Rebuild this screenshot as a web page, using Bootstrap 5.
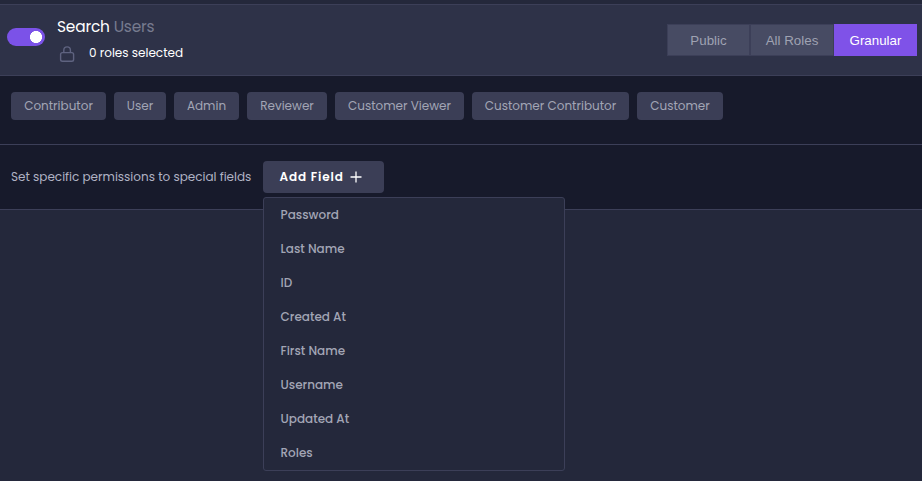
<!DOCTYPE html>
<html lang="en">
<head>
<meta charset="utf-8">
<meta name="viewport" content="width=device-width, initial-scale=1">
<title>Search Users permissions</title>
<link href="https://cdn.jsdelivr.net/npm/bootstrap@5.3.0/dist/css/bootstrap.min.css" rel="stylesheet">
<style>
:root{--line:#3c3f58;--panel:#24283b;--deep:#171a2b;--muted:#a2a5b5}
body{background:var(--panel);font-family:Poppins,Inter,sans-serif;font-size:12px;line-height:20px;color:#fff;height:481px;overflow:hidden}
.perm-head{height:72px;margin-top:4px;background:#2e3248;border-top:1px solid var(--line);border-bottom:1px solid var(--line);padding:0 5px 0 7px}
.switch-lg.form-switch{padding:0;min-height:0;margin:-6px 12px 0 0;line-height:0}
.switch-lg .form-check-input{width:38px;height:18px;margin:0;float:none;background-color:#7b52e8;border:0;background-size:auto;background-image:radial-gradient(circle at 29px 9px,#fff 5.7px,transparent 6.3px)!important;background-position:0 0}
.perm-text{margin-top:-3px}
.perm-title{font-size:15.4px;line-height:24px;letter-spacing:-.2px;margin-bottom:1px}
.perm-title span{color:#777b8f}
.perm-lock{margin-top:2px}
.seg .btn{font:13.333px/20px "Liberation Sans",Arial,sans-serif;width:83px;height:32px;padding:6px 0 4px;border-radius:0;border:1px solid var(--line);background:#474b63;color:#9fa2b2}
.seg .btn.mid{width:84px}
.seg .btn.active{background:#7f52e8;border-color:#7f52e8;color:#fff}
.band{background:var(--deep);border-bottom:1px solid var(--line)}
.roles{height:69px;padding:16px 11px;gap:8px}
.role{height:28px;border-radius:4px;background:#3b3e56;color:var(--muted);line-height:28px;text-align:center;white-space:nowrap}
.w1{width:95px}.w2{width:52px}.w3{width:65px}.w4{width:80px}.w5{width:129px}.w6{width:157px}.w7{width:86px}
.fields{height:65px;padding:16px 11px}
.fields-label{width:252px;color:#b0b2c4;white-space:nowrap}
.add{width:121px;height:32px;padding:0 0 0 16.5px;border:0;border-radius:4px;background:#3b3e56!important;color:#fff!important;font-size:12px;font-weight:600;letter-spacing:.9px;text-align:left}
.add svg{margin-left:6.4px}
.field-menu.dropdown-menu{top:36px;left:0;width:302px;height:274px;padding:0;background:var(--panel);border:1px solid var(--line);border-radius:3px}
.field-menu .dropdown-item{height:34px;padding:7px 16.5px;font-size:12px;line-height:20px;font-weight:500;color:var(--muted)}
</style>
</head>
<body>
<header class="perm-head d-flex align-items-center">
  <div class="form-check form-switch switch-lg"><input class="form-check-input" type="checkbox" role="switch" checked aria-label="Enable search"></div>
  <div class="perm-text me-auto">
    <div class="perm-title">Search <span>Users</span></div>
    <div class="d-flex align-items-center mt-1">
      <svg width="20" height="16" viewBox="0 0 20 16" fill="none" stroke="#5f6380" stroke-width="1.4" class="perm-lock me-2 flex-shrink-0"><rect x="3.6" y="6.6" width="13" height="8.6" rx="1.8"/><path d="M6.8 6.4V4.2a3.3 3.3 0 0 1 6.6 0v2.2"/></svg>
      <div class="ms-1">0 roles selected</div>
    </div>
  </div>
  <div class="seg d-flex">
    <button class="btn" type="button">Public</button><button class="btn mid" type="button">All Roles</button><button class="btn active" type="button">Granular</button>
  </div>
</header>
<section class="band roles d-flex">
  <div class="role w1">Contributor</div><div class="role w2">User</div><div class="role w3">Admin</div><div class="role w4">Reviewer</div><div class="role w5">Customer Viewer</div><div class="role w6">Customer Contributor</div><div class="role w7">Customer</div>
</section>
<section class="band fields d-flex align-items-center">
  <div class="fields-label">Set specific permissions to special fields</div>
  <div class="dropdown position-relative">
    <button class="btn add d-flex align-items-center" type="button" aria-expanded="true">Add Field
      <svg width="12" height="12" viewBox="0 0 12 12" stroke="#fff" stroke-width="1.3"><path d="M6 .5v11M.5 6h11"/></svg></button>
    <div class="dropdown-menu field-menu show">
      <a class="dropdown-item" href="#">Password</a>
      <a class="dropdown-item" href="#">Last Name</a>
      <a class="dropdown-item" href="#">ID</a>
      <a class="dropdown-item" href="#">Created At</a>
      <a class="dropdown-item" href="#">First Name</a>
      <a class="dropdown-item" href="#">Username</a>
      <a class="dropdown-item" href="#">Updated At</a>
      <a class="dropdown-item" href="#">Roles</a>
    </div>
  </div>
</section>
<script src="https://cdn.jsdelivr.net/npm/bootstrap@5.3.0/dist/js/bootstrap.bundle.min.js"></script>
</body>
</html>
